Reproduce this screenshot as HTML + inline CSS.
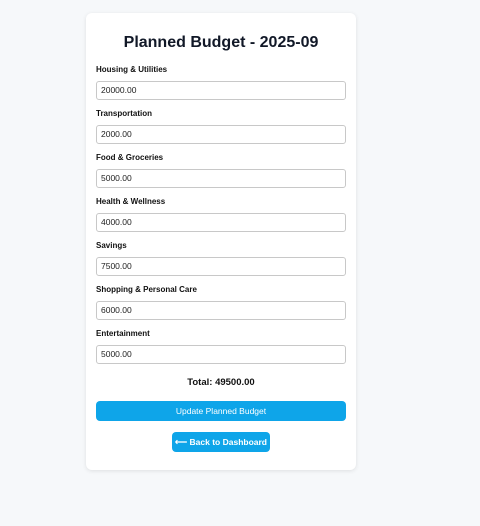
<!DOCTYPE html>
<html><head><style>
body{margin:0;width:480px;height:526px;background:#f6f8fa;font-family:"Liberation Sans",sans-serif;position:relative;overflow:hidden}
.card{position:absolute;left:86px;top:13px;width:270px;height:457px;background:#fff;border-radius:6px;box-shadow:0 1px 4px rgba(0,0,0,.1)}
h1{position:absolute;left:0;right:0;top:20px;margin:0;text-align:center;font-size:16px;font-weight:bold;color:#111827;line-height:20px}
.l{position:absolute;left:10px;font-size:8px;font-weight:bold;color:#111;line-height:10px}
.i{position:absolute;left:10px;height:17px;border:1px solid #c8c8c8;border-radius:3px;font-size:8.5px;line-height:17px;padding-left:4px;box-sizing:content-box;width:244px;color:#222}
.t{position:absolute;left:0;right:0;top:364px;text-align:center;font-size:9.5px;font-weight:bold;color:#111}
.b{position:absolute;left:10px;width:250px;top:388px;height:20px;background:#0ea5e9;border-radius:4px;color:#fff;font-size:8.5px;text-align:center;line-height:20px}
.k{position:absolute;left:86px;width:98px;top:419px;height:20px;background:#0ea5e9;border-radius:4px;color:#fff;font-size:8.5px;font-weight:bold;text-align:center;line-height:20px}
</style></head><body><div class="card">
<h1>Planned Budget - 2025-09</h1>
<div class="l" style="top:52px">Housing &amp; Utilities</div><div class="i" style="top:68px">20000.00</div>
<div class="l" style="top:96px">Transportation</div><div class="i" style="top:112px">2000.00</div>
<div class="l" style="top:140px">Food &amp; Groceries</div><div class="i" style="top:156px">5000.00</div>
<div class="l" style="top:184px">Health &amp; Wellness</div><div class="i" style="top:200px">4000.00</div>
<div class="l" style="top:228px">Savings</div><div class="i" style="top:244px">7500.00</div>
<div class="l" style="top:272px">Shopping &amp; Personal Care</div><div class="i" style="top:288px">6000.00</div>
<div class="l" style="top:316px">Entertainment</div><div class="i" style="top:332px">5000.00</div>
<div class="t">Total: 49500.00</div>
<div class="b">Update Planned Budget</div>
<div class="k">⟵ Back to Dashboard</div>
</div></body></html>
